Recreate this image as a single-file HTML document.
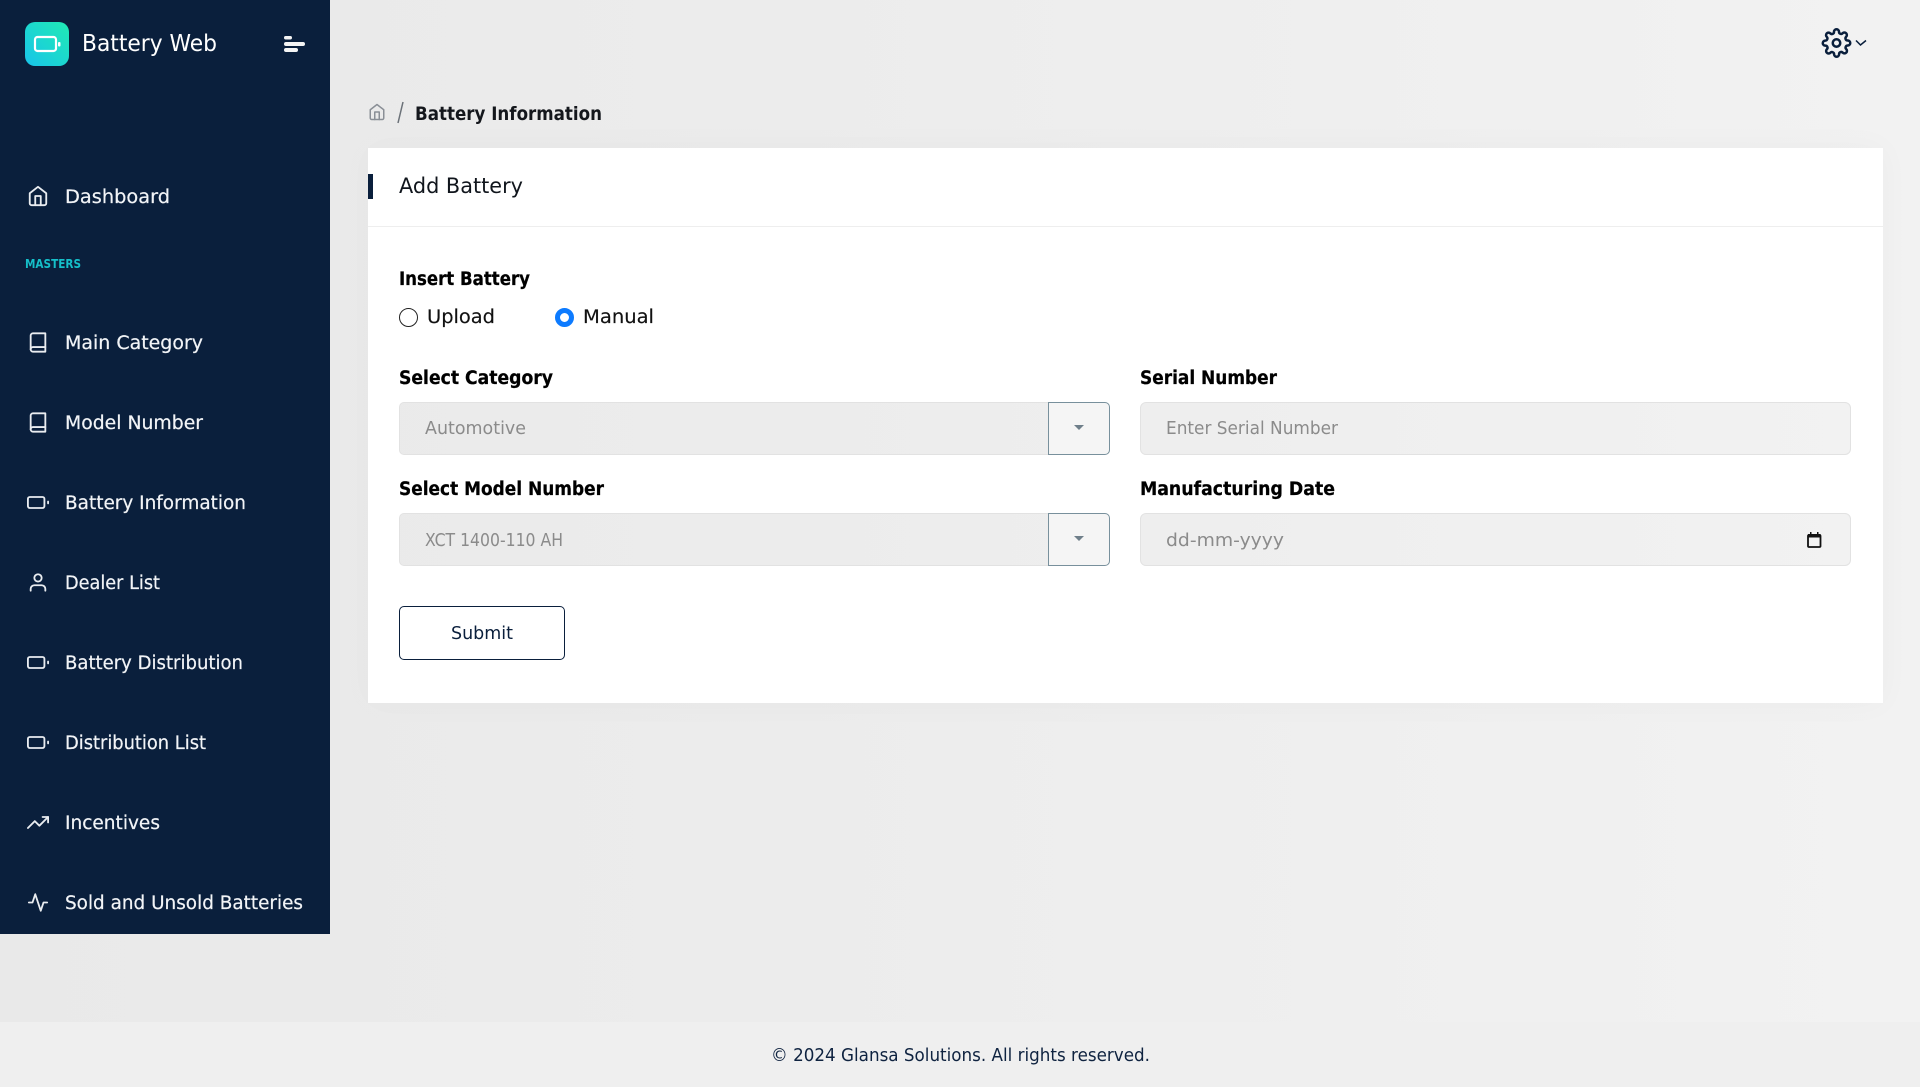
<!DOCTYPE html>
<html lang="en"><head><meta charset="utf-8"><title>Battery Web</title>
<style>
html,body{margin:0;padding:0;width:1920px;height:1087px;overflow:hidden}
body{position:relative;background:linear-gradient(90deg,#e9e9e9 0,#ececec 40%,#f2f2f2 100%);background-attachment:fixed;font-family:"DejaVu Sans","Liberation Sans",sans-serif}
.a{position:absolute;box-sizing:border-box}
.side{left:0;top:0;width:330px;height:934px;background:#0a1f3c}
.logo{left:25px;top:22px;width:44px;height:44px;border-radius:10px;background:linear-gradient(45deg,#18c4ea,#20ebb4)}
.card{left:368px;top:148px;width:1515px;height:555px;background:#fff;box-shadow:0 0 30px rgba(0,0,0,.03)}
.hr{left:368px;top:226px;width:1515px;height:1px;background:#eeeeee}
.acc{left:368px;top:174px;width:5px;height:25px;background:#0a1f3c}
.inp{background:linear-gradient(90deg,#e9e9e9 0,#ececec 40%,#f2f2f2 100%);background-attachment:fixed;border:1px solid #e2e2e2}
.l{left:399px;width:650px;height:53px;border-radius:5px 0 0 5px}
.r{left:1140px;width:711px;height:53px;border-radius:6px}
.b{left:1048px;width:62px;height:53px;background:#f5f5f5;border:1px solid #78909c;border-radius:0 5px 5px 0}
.caret{left:1074px;width:0;height:0;border-left:5px solid transparent;border-right:5px solid transparent;border-top:5px solid #6f7f8a}
.radio{width:19px;height:19px;border-radius:50%}
.sub{left:399px;top:606px;width:166px;height:54px;border:1px solid #0a1f3c;border-radius:5px;background:#fff}
.foot{left:0;top:1022px;width:1920px;height:65px;background:#efefef}
svg.o{position:absolute;left:0;top:0}
text{font-family:"DejaVu Sans","Liberation Sans",sans-serif}
.n{fill:#f2f4f7;font-size:18.5px;stroke:#f2f4f7;stroke-width:.2px}
.h{font-weight:700;font-size:18.5px;fill:#000;stroke:#000;stroke-width:.25px}
.p{fill:#8b8b8b;font-size:17.500px}
.i{fill:none;stroke:#e9ecf0;stroke-width:2;stroke-linecap:round;stroke-linejoin:round}
</style></head><body>
<aside class="a side"></aside>
<div class="a logo"></div>
<div class="a foot"></div>
<main>
<div class="a card"></div><div class="a hr"></div><div class="a acc"></div>
<div class="a radio" style="left:399px;top:308px;border:1.5px solid #222;background:#fff"></div>
<div class="a radio" style="left:555px;top:308px;border:5.5px solid #0d7bff;background:#fff"></div>
<div class="a inp l" style="top:402px"></div><div class="a b" style="top:402px"></div><div class="a caret" style="top:425px"></div>
<div class="a inp r" style="top:402px"></div>
<div class="a inp l" style="top:513px"></div><div class="a b" style="top:513px"></div><div class="a caret" style="top:536px"></div>
<div class="a inp r" style="top:513px"></div>
<div class="a sub"></div>
</main>
<svg class="o" width="1920" height="1087" viewBox="0 0 1920 1087" xmlns="http://www.w3.org/2000/svg">
<!-- logo -->
<rect x="35" y="37" width="21" height="14" rx="2.5" fill="none" stroke="#fff" stroke-width="2.2"/>
<rect x="58" y="42" width="2.500" height="4.500" rx="1" fill="#fff"/>
<text x="82" y="51" font-size="23.500" fill="#fff" textLength="135" lengthAdjust="spacingAndGlyphs">Battery Web</text>
<rect x="284" y="36" width="8" height="3.5" rx="1.7" fill="#f4f4f4"/><rect x="284" y="42" width="21" height="4" rx="2" fill="#f4f4f4"/><rect x="284" y="48" width="14" height="4" rx="2" fill="#f4f4f4"/>
<!-- nav text -->
<text class="n" x="65" y="203" textLength="105" lengthAdjust="spacingAndGlyphs">Dashboard</text>
<text x="25" y="268" font-size="12" font-weight="700" fill="#15bfc9" textLength="56" lengthAdjust="spacingAndGlyphs">MASTERS</text>
<text class="n" x="65" y="349" textLength="138" lengthAdjust="spacingAndGlyphs">Main Category</text>
<text class="n" x="65" y="429" textLength="138" lengthAdjust="spacingAndGlyphs">Model Number</text>
<text class="n" x="65" y="509" textLength="181" lengthAdjust="spacingAndGlyphs">Battery Information</text>
<text class="n" x="65" y="589" textLength="95" lengthAdjust="spacingAndGlyphs">Dealer List</text>
<text class="n" x="65" y="669" textLength="178" lengthAdjust="spacingAndGlyphs">Battery Distribution</text>
<text class="n" x="65" y="749" textLength="141" lengthAdjust="spacingAndGlyphs">Distribution List</text>
<text class="n" x="65" y="829" textLength="95" lengthAdjust="spacingAndGlyphs">Incentives</text>
<text class="n" x="65" y="909" textLength="238" lengthAdjust="spacingAndGlyphs">Sold and Unsold Batteries</text>
<!-- nav icons -->
<g transform="translate(27,185) scale(.9167)" class="i"><path d="M3 9l9-7 9 7v11a2 2 0 0 1-2 2H5a2 2 0 0 1-2-2z"/><polyline points="9 22 9 12 15 12 15 22"/></g>
<g transform="translate(27,331.500) scale(.9167)" class="i"><path d="M4 19.5A2.500 2.500 0 0 1 6.500 17H20"/><path d="M6.500 2H20v20H6.500A2.500 2.500 0 0 1 4 19.500v-15A2.500 2.500 0 0 1 6.500 2z"/></g>
<g transform="translate(27,411.500) scale(.9167)" class="i"><path d="M4 19.5A2.500 2.500 0 0 1 6.500 17H20"/><path d="M6.500 2H20v20H6.500A2.500 2.500 0 0 1 4 19.500v-15A2.500 2.500 0 0 1 6.500 2z"/></g>
<g transform="translate(27,491.500) scale(.9167)" class="i"><rect x="1" y="6" width="18" height="12" rx="2" ry="2"/><line x1="23" y1="13" x2="23" y2="11"/></g>
<g transform="translate(27,571.500) scale(.9167)" class="i"><path d="M20 21v-2a4 4 0 0 0-4-4H8a4 4 0 0 0-4 4v2"/><circle cx="12" cy="7" r="4"/></g>
<g transform="translate(27,651.500) scale(.9167)" class="i"><rect x="1" y="6" width="18" height="12" rx="2" ry="2"/><line x1="23" y1="13" x2="23" y2="11"/></g>
<g transform="translate(27,731.500) scale(.9167)" class="i"><rect x="1" y="6" width="18" height="12" rx="2" ry="2"/><line x1="23" y1="13" x2="23" y2="11"/></g>
<g transform="translate(27,811.500) scale(.9167)" class="i"><polyline points="23 6 13.500 15.500 8.500 10.500 1 18"/><polyline points="17 6 23 6 23 12"/></g>
<g transform="translate(27,891.500) scale(.9167)" class="i"><polyline points="22 12 18 12 15 21 9 3 6 12 2 12"/></g>
<!-- topbar -->
<g transform="translate(1821.500,28) scale(1.25)" fill="none" stroke="#0a1f3c" stroke-width="2" stroke-linecap="round" stroke-linejoin="round"><circle cx="12" cy="12" r="3"/><path d="M19.400 15a1.650 1.650 0 0 0 .33 1.820l.06.06a2 2 0 0 1 0 2.830 2 2 0 0 1-2.830 0l-.06-.06a1.650 1.650 0 0 0-1.820-.33 1.650 1.650 0 0 0-1 1.510V21a2 2 0 0 1-2 2 2 2 0 0 1-2-2v-.09A1.650 1.650 0 0 0 9 19.400a1.650 1.650 0 0 0-1.820.33l-.06.06a2 2 0 0 1-2.830 0 2 2 0 0 1 0-2.830l.06-.06a1.650 1.650 0 0 0 .33-1.820 1.650 1.650 0 0 0-1.510-1H3a2 2 0 0 1-2-2 2 2 0 0 1 2-2h.09A1.650 1.650 0 0 0 4.600 9a1.650 1.650 0 0 0-.33-1.820l-.06-.06a2 2 0 0 1 0-2.830 2 2 0 0 1 2.830 0l.06.06a1.650 1.650 0 0 0 1.820.33H9a1.650 1.650 0 0 0 1-1.510V3a2 2 0 0 1 2-2 2 2 0 0 1 2 2v.09a1.650 1.650 0 0 0 1 1.510 1.650 1.650 0 0 0 1.820-.33l.06-.06a2 2 0 0 1 2.830 0 2 2 0 0 1 0 2.830l-.06.06a1.650 1.650 0 0 0-.33 1.820V9a1.650 1.650 0 0 0 1.510 1H21a2 2 0 0 1 2 2 2 2 0 0 1-2 2h-.09a1.650 1.650 0 0 0-1.510 1z"/></g>
<polyline points="1856,40.500 1860.500,45 1866,40.500" fill="none" stroke="#0a1f3c" stroke-width="1.500"/>
<!-- breadcrumb -->
<g transform="translate(368,103) scale(.75)" fill="none" stroke="#8a8f96" stroke-width="2" stroke-linecap="round" stroke-linejoin="round"><path d="M3 9l9-7 9 7v11a2 2 0 0 1-2 2H5a2 2 0 0 1-2-2z"/><polyline points="9 22 9 12 15 12 15 22"/></g>
<line x1="403" y1="102" x2="398" y2="123" stroke="#6b7178" stroke-width="1.500"/>
<text x="415" y="120" font-size="19" font-weight="700" fill="#14171c" textLength="187" lengthAdjust="spacingAndGlyphs">Battery Information</text>
<!-- card text -->
<text x="399" y="193" font-size="21.500" fill="#10151c" textLength="124" lengthAdjust="spacingAndGlyphs">Add Battery</text>
<text class="h" x="399" y="285" textLength="131" lengthAdjust="spacingAndGlyphs">Insert Battery</text>
<text x="427" y="323" font-size="18.500" fill="#111" stroke="#111" stroke-width=".15" textLength="68" lengthAdjust="spacingAndGlyphs">Upload</text>
<text x="583" y="323" font-size="18.500" fill="#111" stroke="#111" stroke-width=".15" textLength="71" lengthAdjust="spacingAndGlyphs">Manual</text>
<text class="h" x="399" y="384" textLength="154" lengthAdjust="spacingAndGlyphs">Select Category</text>
<text class="h" x="1140" y="384" textLength="137" lengthAdjust="spacingAndGlyphs">Serial Number</text>
<text class="p" x="425" y="434" textLength="101" lengthAdjust="spacingAndGlyphs">Automotive</text>
<text class="p" x="1166" y="434" textLength="172" lengthAdjust="spacingAndGlyphs">Enter Serial Number</text>
<text class="h" x="399" y="495" textLength="205" lengthAdjust="spacingAndGlyphs">Select Model Number</text>
<text class="h" x="1140" y="495" textLength="195" lengthAdjust="spacingAndGlyphs">Manufacturing Date</text>
<text class="p" x="425" y="546" textLength="138" lengthAdjust="spacingAndGlyphs">XCT 1400-110 AH</text>
<text class="p" x="1166" y="546" textLength="118" lengthAdjust="spacingAndGlyphs">dd-mm-yyyy</text>
<rect x="1808" y="535" width="12.500" height="12" rx="1" fill="none" stroke="#111" stroke-width="1.800"/><rect x="1808" y="534" width="12.500" height="3.500" fill="#111"/><rect x="1810" y="532" width="1.500" height="3" fill="#111"/><rect x="1817" y="532" width="1.500" height="3" fill="#111"/>
<text x="451" y="639" font-size="17.500" fill="#0a1f3c" textLength="62" lengthAdjust="spacingAndGlyphs">Submit</text>
<text x="771" y="1061" font-size="18" fill="#0f2340" textLength="379" lengthAdjust="spacingAndGlyphs">© 2024 Glansa Solutions. All rights reserved.</text>
</svg>
</body></html>
